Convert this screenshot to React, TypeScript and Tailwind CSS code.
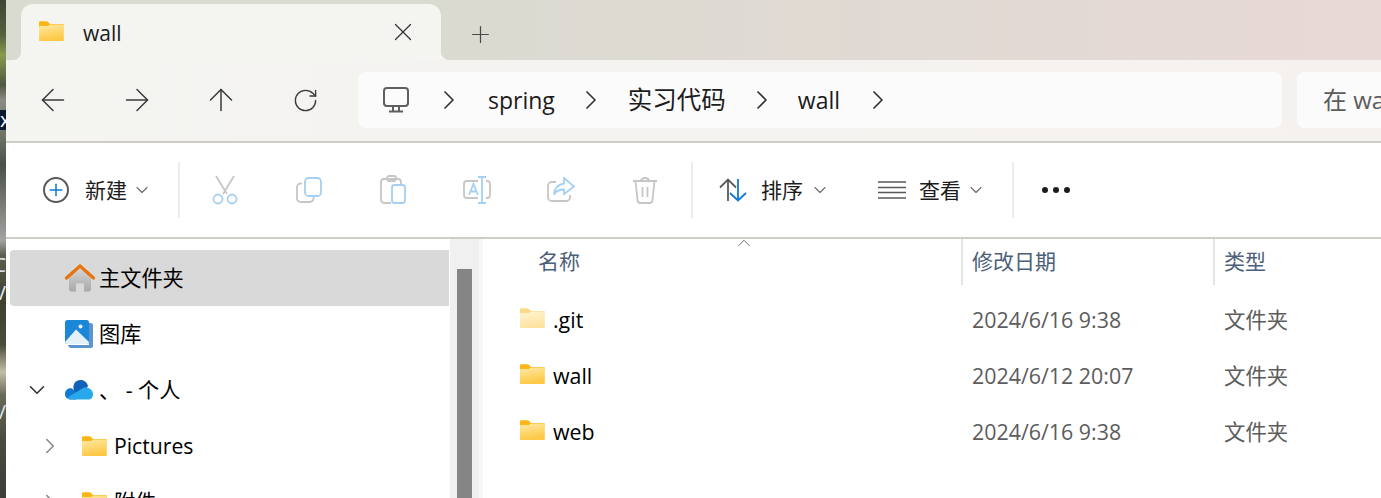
import { ArrowLeft, ArrowRight, ArrowUp, ChevronDown, ChevronRight, ChevronUp, Plus, RotateCw, X } from 'lucide-react'

const font = "font-['Open_Sans','Noto_Sans_CJK_SC',sans-serif]"

function Folder({ faded = false, className = '' }: { faded?: boolean; className?: string }) {
    const id = faded ? 'folderFaded' : 'folderBody'
    return (
        <svg viewBox="0 0 26 20" className={className} style={{ opacity: faded ? 0.5 : 1 }}>
            <defs>
                <linearGradient id={id} x1="0" y1="0" x2="0.3" y2="1">
                    <stop offset="0" stopColor="#ffeaa6" />
                    <stop offset="1" stopColor="#fdc845" />
                </linearGradient>
            </defs>
            <path d="M1 1.5C1 .8 1.6.3 2.2.3h6.3c.6 0 1 .3 1.5.8L12 3h12.800c.6 0 1 .5 1 1v2H1z" fill="#fbb514" />
            <path d="M1 19V6.500C1 5.700 1.500 5 2.400 5H10l2-1.500h12.800c.6 0 1 .5 1 1V19c0 .6-.4 1-1 1H2c-.6 0-1-.4-1-1z" fill={`url(#${id})`} />
        </svg>
    )
}

function Monitor() {
    return (
        <svg viewBox="0 0 26 26" className="w-[26px] h-[26px] shrink-0" fill="none" stroke="#5f5f5f" strokeWidth="2">
            <rect x="1" y="1" width="24" height="18" rx="3" />
            <path d="M10 19v5M16 19v5M6 24.500h14" />
        </svg>
    )
}

function PlusCircle() {
    return (
        <div className="w-[26px] h-[26px] rounded-full border-2 border-[#5a5a5a] flex items-center justify-center">
            <Plus size={20} strokeWidth={1.8} className="text-[#0f7ad6] shrink-0" />
        </div>
    )
}

function Scissors() {
    return (
        <svg viewBox="0 0 26 30" className="w-[26px] h-[30px]" fill="none" strokeWidth="1.800">
            <path d="M4 1l11 18M22 1L11 19" stroke="#c6c6c6" />
            <circle cx="6" cy="24" r="4.500" stroke="#a6d0f3" />
            <circle cx="20" cy="24" r="4.500" stroke="#a6d0f3" />
        </svg>
    )
}

function Copy() {
    return (
        <svg viewBox="0 0 26 26" className="w-[26px] h-[26px]" fill="none" strokeWidth="1.800">
            <path d="M6 6.500H4.500A3.500 3.500 0 0 0 1 10v11.500A3.500 3.500 0 0 0 4.500 25H14a3.500 3.500 0 0 0 3.500-3.500V20" stroke="#c6c6c6" />
            <rect x="9" y="1" width="16" height="18" rx="3.500" stroke="#a6d0f3" />
        </svg>
    )
}

function Paste() {
    return (
        <svg viewBox="0 0 26 30" className="w-[26px] h-[30px]" fill="none" strokeWidth="1.800">
            <path d="M11 28H4a3 3 0 0 1-3-3V7a3 3 0 0 1 3-3h14a3 3 0 0 1 3 3v2" stroke="#c6c6c6" />
            <rect x="7" y="1" width="9" height="5" rx="2" stroke="#c6c6c6" />
            <rect x="12" y="10" width="13" height="18" rx="2.500" stroke="#a6d0f3" />
        </svg>
    )
}

function Rename() {
    return (
        <svg viewBox="0 0 28 28" className="w-[28px] h-[28px]" fill="none" strokeWidth="1.800">
            <path d="M15 5H4a3 3 0 0 0-3 3v11a3 3 0 0 0 3 3h11M23 5h1a3 3 0 0 1 3 3v11a3 3 0 0 1-3 3h-1" stroke="#c6c6c6" />
            <path d="M19 1v26M15 1h8M15 27h8M6 19l4.500-11L15 19M7.500 15.500h6" stroke="#a6d0f3" />
        </svg>
    )
}

function Share() {
    return (
        <svg viewBox="0 0 28 26" className="w-[28px] h-[26px]" fill="none" strokeWidth="1.800">
            <path d="M9 5H5a4 4 0 0 0-4 4v11a4 4 0 0 0 4 4h15a4 4 0 0 0 3-3.500V18" stroke="#c6c6c6" />
            <path d="M17 1l10 8.500L17 17v-4.500c-5 0-8 1.500-10 5 .5-6 4-10 10-11z" stroke="#a6d0f3" />
        </svg>
    )
}

function Trash() {
    return (
        <svg viewBox="0 0 26 28" className="w-[26px] h-[28px]" fill="none" stroke="#c6c6c6" strokeWidth="1.800">
            <path d="M1 5h24M9 5c0-4 8-4 8 0M3.500 5l2 19a3 3 0 0 0 3 3h9a3 3 0 0 0 3-3l2-19M10.500 11v10M15.500 11v10" />
        </svg>
    )
}

function SortIcon() {
    return (
        <svg viewBox="0 0 28 24" className="w-[28px] h-[24px]" fill="none" strokeWidth="1.800">
            <path d="M9 23V2M1 9.500L9 1.500l8 8" stroke="#5a5a5a" />
            <path d="M19 1v21M11 15l8 7.500 8-7.500" stroke="#0f7ad6" />
        </svg>
    )
}

function ViewIcon() {
    return (
        <svg viewBox="0 0 28 20" className="w-[28px] h-[20px]" fill="none" stroke="#5a5a5a" strokeWidth="1.500">
            <path d="M0 2h28M0 7.500h28M0 12.500h28M0 18h28" />
        </svg>
    )
}

function HomeIcon() {
    return (
        <svg viewBox="0 0 30 28" className="w-[30px] h-[28px]">
            <defs>
                <linearGradient id="homeWall" x1="0" y1="0" x2="0" y2="1">
                    <stop offset="0" stopColor="#d9d9d9" />
                    <stop offset="1" stopColor="#a8a8a8" />
                </linearGradient>
            </defs>
            <path d="M4 13l11-10 11 10v12c0 1.500-1 2.500-2.500 2.500H19v-8h-8v8H6.500C5 27.500 4 26.500 4 25z" fill="url(#homeWall)" />
            <path d="M1.500 14L15 2l13.500 12" fill="none" stroke="#e8720c" strokeWidth="3.200" strokeLinecap="round" />
        </svg>
    )
}

function GalleryIcon() {
    return (
        <svg viewBox="0 0 28 28" className="w-[28px] h-[28px]">
            <path d="M3 25h21V3h2c1 0 2 1 2 2v21c0 1-1 2-2 2H6c-1 0-3-1-3-3z" fill="#5b94cf" />
            <rect x="0" y="0" width="24" height="24" rx="2.500" fill="#1b87d8" />
            <path d="M0 22L11 9.500 24 22c0 1-1 2-2 2H2c-1 0-2-1-2-2z" fill="#e4f1fb" />
            <circle cx="15.500" cy="6.500" r="2" fill="#e4f1fb" />
        </svg>
    )
}

function CloudIcon() {
    return (
        <svg viewBox="0 0 28 20" className="w-[28px] h-[20px]">
            <path d="M10 14C6 5 10 0 15.500 0c4 0 6.500 2.500 7.500 6l-5 8z" fill="#0f62b5" />
            <path d="M6 19.500C2 19.500 0 17 0 14c0-3.500 3-6.500 7-5.500L14 15l-3 4.500z" fill="#0f78d4" />
            <path d="M6 19.500c-2 0-3-1-3.500-2L18 8c4-1.500 10 1 10 6.500 0 3-2 5-5 5z" fill="#28a8ea" />
        </svg>
    )
}

function Separator() {
    return <div className="w-[2px] h-[56px] bg-[#ececec]" />
}

function ToolIcon({ children }: { children: React.ReactNode }) {
    return <div className="w-[84px] flex items-center justify-center">{children}</div>
}

function NavIcon({ children }: { children: React.ReactNode }) {
    return <div className="w-[84px] shrink-0 flex justify-center">{children}</div>
}

function Crumb() {
    return <ChevronRight size={32} strokeWidth={1.3} className="shrink-0 text-[#333333]" />
}

function Caret({ className = '' }: { className?: string }) {
    return <ChevronDown size={20} strokeWidth={1.3} className={`shrink-0 text-[#6a6a6a] ${className}`} />
}

function TreeRow({ level, open, icon, label, active }: { level: 0 | 1; open?: boolean | null; icon: React.ReactNode; label: string; active?: boolean }) {
    return (
        <div className={`h-[56px] flex items-center rounded-l shrink-0 ${active ? 'bg-[#d9d9d9]' : ''} ${level === 0 ? 'pl-[19px]' : 'pl-[32px]'}`}>
            <div className={`w-[16px] flex justify-center ${level === 0 ? 'mr-[20px]' : 'mr-[23px]'}`}>
                {open === true && <ChevronDown size={26} strokeWidth={1.5} className="shrink-0 text-[#333333]" />}
                {open === false && <ChevronRight size={26} strokeWidth={1.5} className="shrink-0 text-[#8a8a8a]" />}
            </div>
            <div className={`${level === 0 ? 'w-[34px]' : 'w-[33px]'} flex items-center`}>{icon}</div>
            <span className="text-[21.200px] text-black whitespace-nowrap">{label}</span>
        </div>
    )
}

function FileRow({ name, date, faded }: { name: string; date: string; faded?: boolean }) {
    return (
        <div className="h-[56px] flex items-center text-[21.400px]">
            <div className="w-[478px] pl-[36px] flex items-center">
                <Folder faded={faded} className="w-[26px] h-[20px] mt-[-3px] mr-[8px]" />
                <span className="text-black">{name}</span>
            </div>
            <div className="w-[252px] pl-[11px] text-[#5c5c5c]">{date}</div>
            <div className="pl-[11px] text-[#5c5c5c] whitespace-nowrap">文件夹</div>
        </div>
    )
}

export default function App() {
    return (
        <div className={`${font} w-[1381px] h-[498px] flex overflow-hidden bg-white`}>
            {/* sliver of desktop wallpaper, with the clipped ends of desktop icon labels */}
            <div className="relative w-[6px] shrink-0 overflow-hidden text-[20px] leading-none text-[#dce8f5] bg-[linear-gradient(180deg,#3e4535_0px,#55603c_35px,#8a9a50_55px,#4f5840_85px,#8b8b85_100px,#6d7566_135px,#4a5048_165px,#7a7c74_205px,#a3a3a3_240px,#5c5f50_255px,#404030_300px,#4c4c3c_345px,#c0c0a8_372px,#6a6a58_395px,#4a4a3e_440px,#3e3e38_498px)]">
                <span className="absolute left-0 top-[110px] w-[6px] h-[20px] bg-[#0c1a30] overflow-hidden text-right text-white">x</span>
                <span className="absolute right-0 top-[255px]">C</span>
                <span className="absolute right-0 top-[283px]">V</span>
                <span className="absolute right-0 top-[402px]">/</span>
            </div>
            <div className="flex-1 min-w-0 flex flex-col">
                {/* title bar */}
                <div className="h-[60px] shrink-0 flex bg-[#f4f4f1]">
                    <div className="w-[15px] h-full bg-[#d9dad0] rounded-br-lg shrink-0" />
                    <div className="w-[420px] h-full shrink-0 pt-[4px] bg-[#d9dad0]">
                        <div className="h-full bg-[#f4f4f1] rounded-t-xl flex items-center pl-[17px] pr-[23px]">
                            <Folder className="w-[26px] h-[20px] mt-[-2px] mr-[19px]" />
                            <span className="text-[21px] font-medium text-[#1c1c1c] mt-[3px]">wall</span>
                            <X size={30} strokeWidth={1} className="ml-auto text-[#333333]" />
                        </div>
                    </div>
                    <div className="flex-1 min-w-0 h-full pt-[8px] pl-[26px] flex items-center rounded-bl-lg bg-gradient-to-r from-[#dadad1] to-[#e8d9d6]">
                        <Plus size={27} strokeWidth={1.1} className="text-[#4a4a4a]" />
                    </div>
                </div>

                {/* address bar */}
                <div className="h-[83px] shrink-0 flex items-center pl-[5px] pb-[1px] bg-gradient-to-r from-[#f4f4f1] to-[#f5f1ef] border-b-2 border-[#d0ccc6]">
                    <NavIcon><ArrowLeft size={36} strokeWidth={1} className="text-[#3a3a3a]" /></NavIcon>
                    <NavIcon><ArrowRight size={36} strokeWidth={1} className="text-[#3a3a3a]" /></NavIcon>
                    <NavIcon><ArrowUp size={36} strokeWidth={1} className="text-[#3a3a3a]" /></NavIcon>
                    <NavIcon><RotateCw size={27} strokeWidth={1.2} className="text-[#3a3a3a]" /></NavIcon>
                    <div className="w-[924px] h-[56px] ml-[11px] bg-[#fbfbfb] rounded-lg flex items-center pl-[25px] text-[#1c1c1c] shrink-0">
                        <Monitor />
                        <div className="ml-[24px]"><Crumb /></div>
                        <span className="ml-[23px] text-[23px]">spring</span>
                        <div className="ml-[20px]"><Crumb /></div>
                        <span className="ml-[21px] text-[24.500px]">实习代码</span>
                        <div className="ml-[20px]"><Crumb /></div>
                        <span className="ml-[20px] text-[23px]">wall</span>
                        <div className="ml-[22px]"><Crumb /></div>
                    </div>
                    <div className="w-[120px] h-[56px] ml-[15px] bg-[#fbfbfb] rounded-l-lg flex items-center pl-[26px] text-[24px] text-[#5c5c5c] shrink-0 overflow-hidden whitespace-nowrap">
                        在 wall 中搜索
                    </div>
                </div>

                {/* command bar */}
                <div className="h-[96px] shrink-0 flex items-center border-b-2 border-[#d0ccc6] text-[21px] text-[#1c1c1c]">
                    <div className="ml-[37px]"><PlusCircle /></div>
                    <span className="ml-[16px] mt-[1px]">新建</span>
                    <Caret className="ml-[5px]" />
                    <div className="ml-[26px]"><Separator /></div>
                    <div className="ml-[3px] flex items-center">
                        <ToolIcon><Scissors /></ToolIcon>
                        <ToolIcon><Copy /></ToolIcon>
                        <ToolIcon><Paste /></ToolIcon>
                        <ToolIcon><Rename /></ToolIcon>
                        <ToolIcon><Share /></ToolIcon>
                        <ToolIcon><Trash /></ToolIcon>
                    </div>
                    <div className="ml-[4px]"><Separator /></div>
                    <div className="ml-[26px]"><SortIcon /></div>
                    <span className="ml-[14px] mt-[1px]">排序</span>
                    <Caret className="ml-[7px]" />
                    <div className="ml-[48px]"><ViewIcon /></div>
                    <span className="ml-[13px] mt-[1px]">查看</span>
                    <Caret className="ml-[5px]" />
                    <div className="ml-[26px]"><Separator /></div>
                    <div className="ml-[28px] flex gap-[5px]">
                        <span className="w-[6px] h-[6px] rounded-full bg-[#1c1c1c]" />
                        <span className="w-[6px] h-[6px] rounded-full bg-[#1c1c1c]" />
                        <span className="w-[6px] h-[6px] rounded-full bg-[#1c1c1c]" />
                    </div>
                </div>

                <div className="flex-1 min-h-0 flex">
                    {/* nav tree */}
                    <div className="w-[444px] shrink-0 pl-[4px] pr-[1px] pt-[11px] flex flex-col overflow-hidden">
                        <TreeRow level={0} active icon={<HomeIcon />} label="主文件夹" />
                        <TreeRow level={0} icon={<GalleryIcon />} label="图库" />
                        <TreeRow level={0} open icon={<CloudIcon />} label="、 - 个人" />
                        <TreeRow level={1} open={false} icon={<Folder className="w-[26px] h-[20px]" />} label="Pictures" />
                        <TreeRow level={1} open={false} icon={<Folder className="w-[26px] h-[20px]" />} label="附件" />
                    </div>

                    {/* scrollbar */}
                    <div className="w-[29px] shrink-0 bg-[#f0f0f0] pl-[7px] pt-[30px]">
                        <div className="w-[15px] h-full bg-[#858585]" />
                    </div>
                    <div className="w-[4px] shrink-0 bg-[#f7f7f7]" />

                    {/* file list */}
                    <div className="flex-1 min-w-0 relative">
                        <ChevronUp size={22} strokeWidth={0.9} className="absolute left-[250px] top-[-7px] text-[#555555]" />
                        <div className="h-[46px] flex text-[21px] text-[#4c607a]">
                            <div className="w-[478px] pl-[55px] flex items-center">名称</div>
                            <div className="w-[252px] pl-[9px] flex items-center border-l-2 border-[#e5e5e5]">修改日期</div>
                            <div className="flex-1 pl-[9px] flex items-center border-l-2 border-[#e5e5e5]">类型</div>
                        </div>
                        <div className="pt-[7px]">
                            <FileRow faded name=".git" date="2024/6/16 9:38" />
                            <FileRow name="wall" date="2024/6/12 20:07" />
                            <FileRow name="web" date="2024/6/16 9:38" />
                        </div>
                    </div>
                </div>
            </div>
        </div>
    )
}
